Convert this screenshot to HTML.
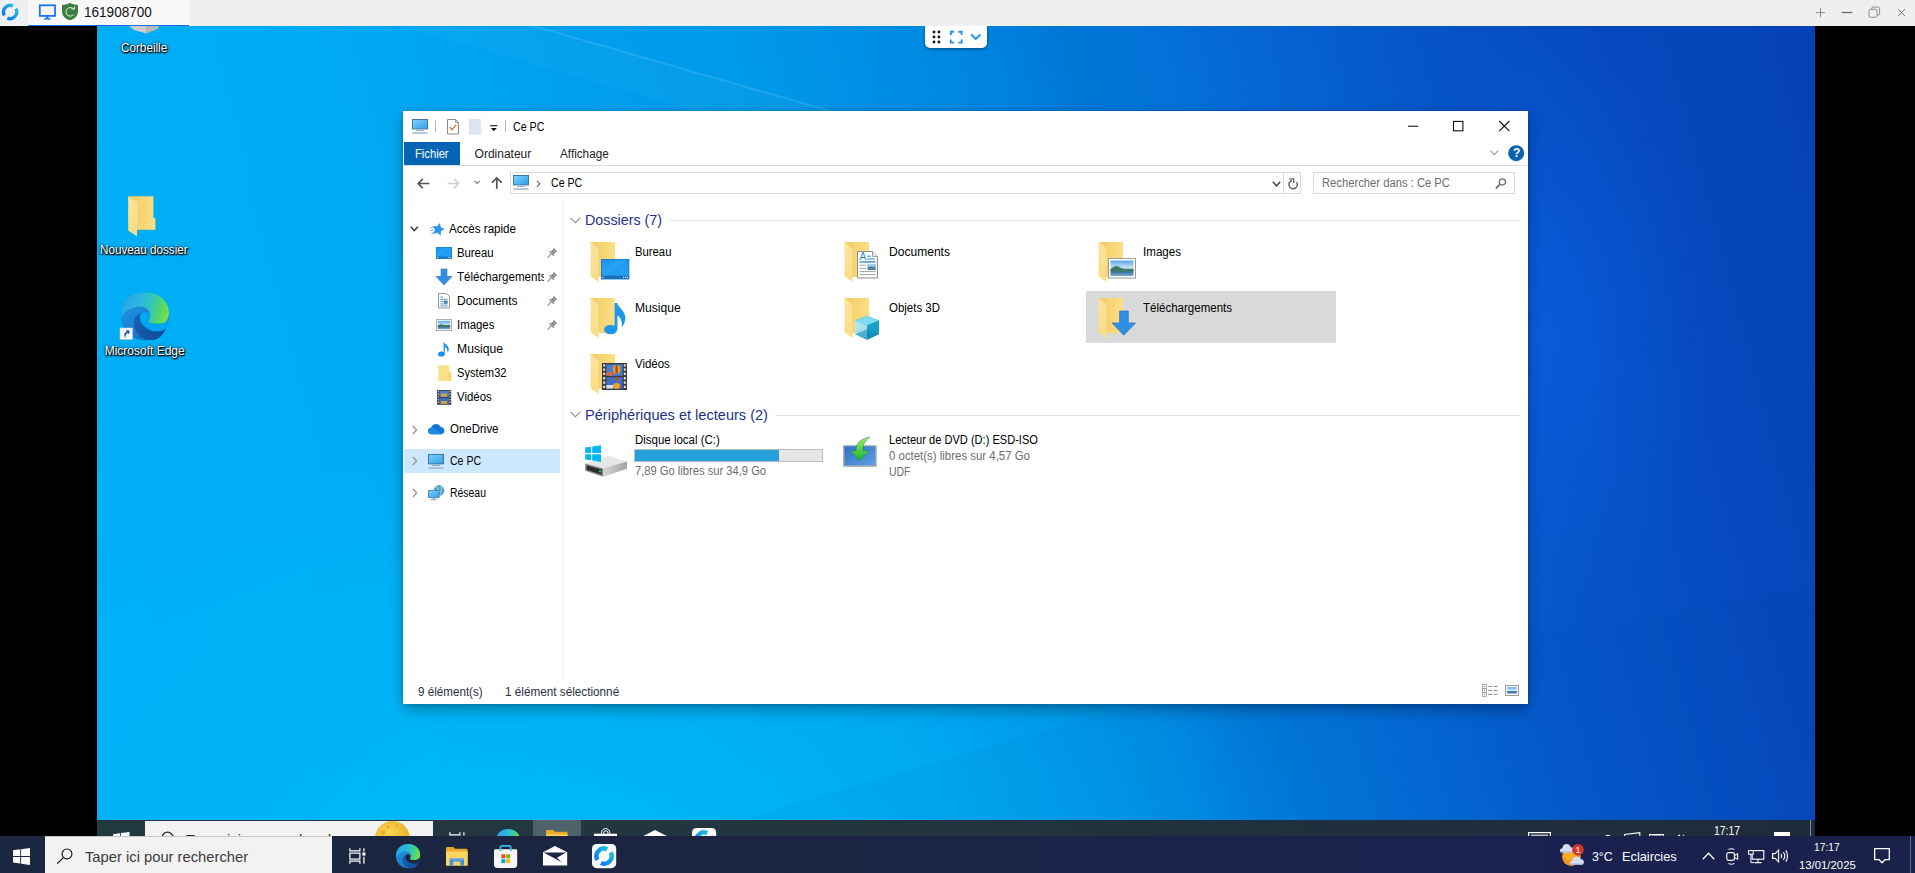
<!DOCTYPE html>
<html lang="fr"><head><meta charset="utf-8"><title>161908700</title>
<style>
html,body{margin:0;padding:0}
body{width:1915px;height:873px;overflow:hidden;background:#000;position:relative;font-family:"Liberation Sans",sans-serif;font-size:12px;color:#000}
.a{position:absolute}
.t{position:absolute;white-space:nowrap;line-height:1}
svg{position:absolute;overflow:visible}
#desk{left:97px;top:26px;width:1718px;height:810px;overflow:hidden;
 background:radial-gradient(ellipse 170px 300px at 1440px 310px,rgba(14,100,240,.5),rgba(14,100,240,0) 100%),radial-gradient(ellipse 760px 420px at 500px 840px,rgba(0,188,248,.85),rgba(0,188,248,0) 100%),linear-gradient(75deg,#00aff6 0%,#00adf4 18%,#00a2ef 32%,#0099e9 44.4%,#0086e0 55.6%,#0080de 58%,#0078d7 60.5%,#0372d8 65.6%,#0560d0 73.4%,#0654c6 80%,#0649be 88.8%,#0541b6 100%)}
.dl{color:#fff;text-shadow:0 1px 2px #000,1px 1px 1px #000,0 0 3px rgba(0,0,0,.8)}
</style></head><body>
<svg width="0" height="0" style="left:0;top:0"><defs>
<linearGradient id="gFb" x1="0" y1="0" x2="1" y2="0"><stop offset="0" stop-color="#f3cc62"/><stop offset="1" stop-color="#fbdf87"/></linearGradient>
<linearGradient id="gFf" x1="0" y1="0" x2="0" y2="1"><stop offset="0" stop-color="#fbe39a"/><stop offset="1" stop-color="#f9dc86"/></linearGradient>
<linearGradient id="gEdge" x1="0" y1="0.2" x2="0.5" y2="1"><stop offset="0" stop-color="#2396e0"/><stop offset="0.5" stop-color="#1b84d6"/><stop offset="1" stop-color="#1670c4"/></linearGradient><linearGradient id="gEdge3" x1="0" y1="0" x2="1" y2="1"><stop offset="0" stop-color="#1763b4"/><stop offset="1" stop-color="#0f4c9a"/></linearGradient>
<linearGradient id="gEdge2" x1="0" y1="0.35" x2="1" y2="0.55"><stop offset="0" stop-color="#2aa4e8"/><stop offset="0.4" stop-color="#2bb8de"/><stop offset="0.62" stop-color="#34c8b4"/><stop offset="0.85" stop-color="#58d866"/><stop offset="1" stop-color="#72e046"/></linearGradient>
<linearGradient id="gLogo" x1="0" y1="1" x2="1" y2="0"><stop offset="0" stop-color="#0a7cff"/><stop offset="1" stop-color="#1fc0d6"/></linearGradient>
<linearGradient id="gMon" x1="0" y1="0" x2="1" y2="1"><stop offset="0" stop-color="#7fd2fb"/><stop offset="1" stop-color="#2f9fe8"/></linearGradient>
<linearGradient id="gDsk" x1="0" y1="0" x2="1" y2="1"><stop offset="0" stop-color="#1b95ee"/><stop offset="0.5" stop-color="#27a2f3"/><stop offset="0.5" stop-color="#1e9af0"/><stop offset="1" stop-color="#2aa4f4"/></linearGradient>
<linearGradient id="gSky" x1="0" y1="0" x2="0" y2="1"><stop offset="0" stop-color="#5aa7e8"/><stop offset="0.5" stop-color="#cfe6f5"/><stop offset="0.55" stop-color="#3f7f6a"/><stop offset="0.75" stop-color="#3d78a5"/><stop offset="1" stop-color="#7fb0d0"/></linearGradient>
<linearGradient id="gCube" x1="0" y1="0" x2="1" y2="1"><stop offset="0" stop-color="#bfeaf2"/><stop offset="1" stop-color="#8fd6e6"/></linearGradient>
<linearGradient id="gHdd" x1="0" y1="0" x2="1" y2="0"><stop offset="0" stop-color="#d6d6d6"/><stop offset="1" stop-color="#a4a4a4"/></linearGradient>
<linearGradient id="gDvd" x1="0" y1="0" x2="1" y2="1"><stop offset="0" stop-color="#2f6fc8"/><stop offset="1" stop-color="#5f9fe0"/></linearGradient>
<linearGradient id="gGrn" x1="0" y1="0" x2="0" y2="1"><stop offset="0" stop-color="#9df06a"/><stop offset="1" stop-color="#19b52c"/></linearGradient>
<radialGradient id="gMoon" cx="0.4" cy="0.35" r="0.7"><stop offset="0" stop-color="#fbd75a"/><stop offset="1" stop-color="#eaa91e"/></radialGradient>
<g id="folder"><path d="M0.5 0H25V35H8z" fill="url(#gFb)"/><path d="M0.5 0L8.5 6.5V40L0.5 34.3z" fill="url(#gFf)"/></g>
<g id="monitor"><rect x="0.5" y="0.5" width="15" height="9.4" fill="url(#gMon)" stroke="#3f77a8" stroke-width="1"/><rect x="7" y="10.4" width="2" height="1" fill="#7fc4f0"/><rect x="4" y="11.1" width="8" height="0.9" fill="#8fa6ba"/><path d="M1 13.2H15L15.9 14.8H0.1z" fill="#a3b6c9"/></g>
<g id="edge" transform="scale(0.5)"><circle cx="24" cy="24.3" r="24" fill="url(#gEdge)"/><path d="M0.4 26C-1.5 12 9 0.2 24 0.2C38 0.2 48 9.5 48 21C48 26 46 31.8 39 31.8C34 31.8 29 31.4 27.6 30.2C26.5 29 29.6 27.5 29.2 22.5C28.8 19 26 14.8 19 14.6C11 14.4 3.5 19.5 0.4 26z" fill="url(#gEdge2)"/><path d="M20.6 20.6C16 22 12.6 26 13 32C13.6 40 20 47.8 30 48.1C37 48.3 42.6 43 44.8 36.4C41 39.4 35 40.2 30 38.4C23 35.8 18.6 30 18.8 25.6C18.9 23.4 19.6 21.6 20.6 20.6z" fill="url(#gEdge3)"/></g>
</defs></svg>
<div class="a" style="left:0px;top:0px;width:1915px;height:26px;background:#efeff2;"></div>
<div class="a" style="left:0px;top:25px;width:28px;height:1px;background:#fafafa;"></div>
<div class="a" style="left:28px;top:0px;width:161px;height:25px;background:#f8f8f8;"></div>
<div class="a" style="left:28px;top:25px;width:161px;height:1px;background:#1a6df5;"></div>
<svg style="left:2px;top:4px" width="16" height="16" viewBox="0 0 16 16"><g fill="none" stroke="url(#gLogo)" stroke-width="3.3" transform="translate(8.1 8)"><path d="M-5.7 3.3A6.6 6.6 0 0 1 2.8 -6"/><path d="M5.7 -3.3A6.6 6.6 0 0 1 -2.8 6"/></g></svg>
<svg style="left:38px;top:4px" width="19" height="17" viewBox="0 0 19 17"><rect x="1.8" y="1.3" width="15.2" height="10.6" fill="none" stroke="#1a73ff" stroke-width="1.8"/><rect x="8" y="12.5" width="2.6" height="2" fill="#1a73ff"/><rect x="6.1" y="14.3" width="6.4" height="1.4" fill="#1a73ff"/></svg>
<svg style="left:61px;top:2px" width="18" height="19" viewBox="0 0 18 19"><path d="M9 0.8C7 2.3 4 2.8 1 2.8V9.5C1 14 4.5 17 9 18.3C13.5 17 17 14 17 9.5V2.8C14 2.8 11 2.3 9 0.8z" fill="#3c7d40"/><path d="M12.6 7.1A4.3 4.3 0 1 0 12.9 12.2" fill="none" stroke="#e8f3e8" stroke-width="1"/><path d="M10.3 6.6L13.2 7.4L13.6 4.6" fill="none" stroke="#e8f3e8" stroke-width="1"/></svg>
<div class="t" style="left:84.2px;top:5.1px;font-size:14px;color:#111;transform:scaleX(0.968);transform-origin:0 0;">161908700</div>
<svg style="left:1815px;top:7px" width="12" height="12" viewBox="0 0 12 12"><path d="M1 5.6H10M5.5 1V10.2" stroke="#8a8a8a" stroke-width="1" fill="none"/></svg>
<svg style="left:1841px;top:7px" width="12" height="12" viewBox="0 0 12 12"><path d="M0.7 5.5H11.3" stroke="#666" stroke-width="1.3" fill="none"/></svg>
<svg style="left:1868px;top:6px" width="13" height="13" viewBox="0 0 13 13"><rect x="1" y="3.3" width="8" height="8" rx="1.5" fill="#efeff2" stroke="#8a8a8a" stroke-width="1"/><path d="M3.6 3V2.6Q3.6 1 5.2 1H10Q11.6 1 11.6 2.6V7.4Q11.6 9 10 9H9.4" fill="none" stroke="#8a8a8a" stroke-width="1"/></svg>
<svg style="left:1896px;top:7px" width="12" height="12" viewBox="0 0 12 12"><path d="M2 2L9.2 9.2M9.2 2L2 9.2" stroke="#777" stroke-width="1" fill="none"/></svg>
<div id="desk" class="a">
<svg style="left:0px;top:0px" width="1718" height="810" viewBox="0 0 1718 810"><path d="M434 0L440 0L736 85L730 85z" fill="#fff" opacity="0.13"/><path d="M300 0L437 0L733 85L600 85z" fill="#fff" opacity="0.025"/><path d="M640 794L1718 794L1718 560L1000 690z" fill="#003a80" opacity="0.035"/></svg>
</div>
<div class="a" style="left:925px;top:26px;width:62px;height:22px;background:#fff;border-radius:0 0 5px 5px;box-shadow:0 1px 3px rgba(0,0,0,.45);clip-path:inset(0 -6px -6px -6px)"></div>
<svg style="left:931.6px;top:29.7px" width="10" height="15" viewBox="0 0 10 15"><g fill="#1a1a1a"><circle cx="2" cy="2" r="1.45"/><circle cx="2" cy="7" r="1.45"/><circle cx="2" cy="12" r="1.45"/><circle cx="6.9" cy="2" r="1.45"/><circle cx="6.9" cy="7" r="1.45"/><circle cx="6.9" cy="12" r="1.45"/></g></svg>
<svg style="left:950px;top:30.5px" width="13" height="13" viewBox="0 0 13 13"><path d="M0.8 4V0.8H4M8.4 0.8H11.6V4M11.6 8.4V11.6H8.4M4 11.6H0.8V8.4" fill="none" stroke="#1e90ff" stroke-width="1.9"/></svg>
<svg style="left:970px;top:33px" width="12" height="8" viewBox="0 0 12 8"><path d="M1.2 1.5L5.8 6L10.4 1.5" fill="none" stroke="#1e90ff" stroke-width="1.9"/></svg>
<svg style="left:129px;top:26px" width="30" height="8" viewBox="0 0 30 8"><path d="M0 0H29.6L29 2.6L17 7.6L5 4z" fill="#c9cbcf"/><path d="M17 0H29.6L29 2.6L17 7.6z" fill="#b4b6ba"/></svg>
<div class="t dl" style="left:120.9px;top:41.6px;font-size:12px;color:#fff;transform:scaleX(0.976);transform-origin:0 0;">Corbeille</div>
<svg style="left:127.5px;top:195.7px" width="28" height="41" viewBox="0 0 28 41"><path d="M0.3 0.3H25.4V22.3H27.4V33.8H0.3z" fill="url(#gFb)"/><path d="M0.3 0.3L9.4 6.8L9 40.2L0.3 34.8z" fill="url(#gFf)"/></svg>
<div class="t dl" style="left:100.2px;top:244.3px;font-size:12px;color:#fff;transform:scaleX(0.973);transform-origin:0 0;">Nouveau dossier</div>
<svg style="left:120.5px;top:292px" width="48" height="48" viewBox="0 0 48 48"><g transform="scale(2)"><use href="#edge"/><path transform="scale(0.5)" d="M21 21C23 19.6 27 20 29 22.4C29.6 27.5 26.5 29 27.6 30.2C29 31.4 34 31.8 39 31.8C43 31.8 46 29.5 47.4 26C47.2 30 46.4 33.5 44.8 36.4C41 39.4 35 40.2 30 38.4C23 35.8 18.6 30 18.8 25.6C18.9 23.4 19.6 21.8 21 21z" fill="#00a6f3"/></g></svg>
<svg style="left:120px;top:327.6px" width="12.6" height="11.4" viewBox="0 0 12.6 11.4"><rect x="0" y="0" width="12.6" height="11.4" fill="#f4f6f8" stroke="#c8ccd0" stroke-width="0.6"/><path d="M3 9C3 5.5 5 4 8 4V2.2L10.8 5L8 7.8V6C6 6 4.3 6.5 3 9z" fill="#2458b8" transform="rotate(-32 6.3 5.7)"/></svg>
<div class="t dl" style="left:104.7px;top:344.6px;font-size:12px;color:#fff;transform:scaleX(1.000);transform-origin:0 0;">Microsoft Edge</div>
<div class="a" style="left:403px;top:110.8px;width:1125px;height:592.9px;background:#fff;box-shadow:0 6px 14px -1px rgba(0,0,0,.32),0 0 4px rgba(0,0,0,.18)"></div>
<svg style="left:412px;top:119px" width="16" height="15" viewBox="0 0 16 15"><use href="#monitor"/></svg>
<div class="a" style="left:435px;top:120px;width:1px;height:12px;background:#b5b5b5;"></div>
<svg style="left:447px;top:118.8px" width="12" height="15.5" viewBox="0 0 12 15.5"><path d="M0.5 0.5H8.5L11.5 3.5V15H0.5z" fill="#fff" stroke="#8a8a8a" stroke-width="1"/><path d="M8.5 0.5V3.5H11.5" fill="none" stroke="#8a8a8a" stroke-width="0.8"/><path d="M2.8 8.3L5 10.8L9.2 5.6" fill="none" stroke="#e8702a" stroke-width="1.3"/></svg>
<svg style="left:469px;top:119.2px" width="13" height="15.7" viewBox="0 0 13 15.7"><path d="M0 0H11.8V15.7H0z" fill="#dce4f2"/><path d="M10.6 9H12.8V15.7H10.6z" fill="#e3eaf5"/></svg>
<svg style="left:489.5px;top:124.5px" width="8" height="7" viewBox="0 0 8 7"><path d="M0.3 0.7H7.3" stroke="#111" stroke-width="1.1"/><path d="M0.8 2.9H6.8L3.8 6.2z" fill="#111"/></svg>
<div class="a" style="left:505px;top:120px;width:1px;height:12px;background:#b5b5b5;"></div>
<div class="t" style="left:513.4px;top:120.6px;font-size:12px;color:#000;transform:scaleX(0.888);transform-origin:0 0;">Ce PC</div>
<svg style="left:1407px;top:120px" width="104" height="12" viewBox="0 0 104 12"><path d="M1 6.2H11.2" stroke="#111" stroke-width="1.1"/><rect x="46.5" y="1.4" width="9.4" height="9.4" fill="none" stroke="#111" stroke-width="1.1"/><path d="M92.2 1L102.4 11.2M102.4 1L92.2 11.2" stroke="#111" stroke-width="1.1"/></svg>
<div class="a" style="left:404px;top:142px;width:56px;height:23px;background:#0564b4;"></div>
<div class="t" style="left:415.4px;top:147.8px;font-size:12px;color:#fff;transform:scaleX(0.933);transform-origin:0 0;">Fichier</div>
<div class="t" style="left:474.6px;top:147.8px;font-size:12px;color:#222;transform:scaleX(1.000);transform-origin:0 0;">Ordinateur</div>
<div class="t" style="left:560.2px;top:147.8px;font-size:12px;color:#222;transform:scaleX(0.978);transform-origin:0 0;">Affichage</div>
<div class="a" style="left:404px;top:165px;width:1123px;height:1px;background:#dadbdc;"></div>
<svg style="left:1490px;top:150px" width="9" height="6" viewBox="0 0 9 6"><path d="M0.5 0.7L4.3 4.6L8.1 0.7" fill="none" stroke="#9a9a9a" stroke-width="1.1"/></svg>
<svg style="left:1508px;top:145px" width="17" height="17" viewBox="0 0 17 17"><circle cx="8.2" cy="8.2" r="8" fill="#0b62ad"/></svg>
<div class="t" style="left:1513.0px;top:147.4px;font-size:12px;color:#fff;font-weight:bold;">?</div>
<svg style="left:417px;top:177.5px" width="13" height="11" viewBox="0 0 13 11"><path d="M12.3 5.5H1.2M5.8 0.9L1.2 5.5L5.8 10.1" fill="none" stroke="#555" stroke-width="1.7"/></svg>
<svg style="left:446.5px;top:177.5px" width="13" height="11" viewBox="0 0 13 11"><path d="M0.5 5.5H11.6M7 0.9L11.6 5.5L7 10.1" fill="none" stroke="#cfcfcf" stroke-width="1.5"/></svg>
<svg style="left:473.5px;top:180px" width="7" height="5" viewBox="0 0 7 5"><path d="M0.6 0.8L3.2 3.4L5.8 0.8" fill="none" stroke="#7a7a7a" stroke-width="1.2"/></svg>
<svg style="left:491px;top:177px" width="12" height="12" viewBox="0 0 12 12"><path d="M5.8 11.8V0.9M1 5.6L5.8 0.9L10.6 5.6" fill="none" stroke="#555" stroke-width="1.7"/></svg>
<div class="a" style="left:510px;top:172px;width:789px;height:20px;background:#fff;border:1px solid #d9d9d9"></div>
<div class="a" style="left:1283px;top:173px;width:1px;height:20px;background:#d9d9d9;"></div>
<svg style="left:513px;top:175px" width="16" height="15" viewBox="0 0 16 15"><use href="#monitor"/></svg>
<svg style="left:535.6px;top:179.5px" width="5" height="8" viewBox="0 0 5 8"><path d="M0.8 0.8L3.8 3.8L0.8 6.8" fill="none" stroke="#6a6a6a" stroke-width="1.2"/></svg>
<div class="t" style="left:550.5px;top:176.7px;font-size:12px;color:#000;transform:scaleX(0.883);transform-origin:0 0;">Ce PC</div>
<svg style="left:1271.5px;top:181px" width="10" height="7" viewBox="0 0 10 7"><path d="M0.8 0.8L4.5 4.8L8.2 0.8" fill="none" stroke="#444" stroke-width="1.5"/></svg>
<svg style="left:1287px;top:177.5px" width="12" height="12" viewBox="0 0 12 12"><path d="M9.6 4.2A4.2 4.2 0 1 1 5 2.5" fill="none" stroke="#666" stroke-width="1.5"/><path d="M2.2 0.9H6.7V5.1" fill="none" stroke="#666" stroke-width="1.4"/></svg>
<div class="a" style="left:1313px;top:172px;width:200px;height:20px;background:#fff;border:1px solid #d9d9d9"></div>
<div class="t" style="left:1322.0px;top:176.6px;font-size:12px;color:#6d6d6d;transform:scaleX(0.936);transform-origin:0 0;">Rechercher dans : Ce PC</div>
<svg style="left:1494.5px;top:178px" width="12" height="11" viewBox="0 0 12 11"><circle cx="7.4" cy="3.9" r="3.1" fill="none" stroke="#6a6a6a" stroke-width="1.3"/><path d="M5.2 6.1L0.8 10.3" stroke="#6a6a6a" stroke-width="1.7"/></svg>
<div class="a" style="left:562px;top:201px;width:1px;height:478px;background:#f1f1f1;"></div>
<div class="a" style="left:404px;top:449px;width:156px;height:24px;background:#cce8ff;"></div>
<svg style="left:410.3px;top:225.5px" width="9" height="7" viewBox="0 0 9 7"><path d="M0.8 0.8L4.3 4.6L7.8 0.8" fill="none" stroke="#404040" stroke-width="1.5"/></svg>
<svg style="left:412px;top:424.5px" width="6" height="10" viewBox="0 0 6 10"><path d="M0.8 0.8L4.6 4.9L0.8 9" fill="none" stroke="#9a9a9a" stroke-width="1.4"/></svg>
<svg style="left:412px;top:456.3px" width="6" height="10" viewBox="0 0 6 10"><path d="M0.8 0.8L4.6 4.9L0.8 9" fill="none" stroke="#9a9a9a" stroke-width="1.4"/></svg>
<svg style="left:412px;top:488.3px" width="6" height="10" viewBox="0 0 6 10"><path d="M0.8 0.8L4.6 4.9L0.8 9" fill="none" stroke="#9a9a9a" stroke-width="1.4"/></svg>
<svg style="left:430px;top:222.5px" width="14" height="12" viewBox="0 0 14 12"><path d="M8.3 0.3L10.1 4.1L14 4.6L11.1 7.4L11.8 11.6L8.3 9.5L4.8 11.6L5.5 7.4L2.8 4.8L6.5 4.1z" fill="#2b98f0" stroke="#2180d8" stroke-width="0.5" transform="rotate(14 8.3 6.2)"/><path d="M0.6 4.8L4 3.6M0.2 7.6L3.6 6.8M1.4 10.6L4.4 9.6" stroke="#4aa6f0" stroke-width="0.9"/></svg>
<svg style="left:436px;top:247px" width="16" height="12" viewBox="0 0 16 12"><rect x="0" y="0" width="16" height="11.8" fill="url(#gDsk)"/><rect x="0" y="9.6" width="16" height="2.2" fill="#1a6fb8"/><rect x="0.3" y="0.3" width="15.4" height="11.2" fill="none" stroke="#1778c8" stroke-width="0.6"/><rect x="0.9" y="10.1" width="1" height="1" fill="#e8f6ff"/><rect x="12.2" y="10.1" width="1" height="1" fill="#e8f6ff"/><rect x="14" y="10.1" width="1" height="1" fill="#e8f6ff"/></svg>
<svg style="left:436px;top:269px" width="16" height="16" viewBox="0 0 16 16"><path d="M5 0H11V7.5H16L8 16L0 7.5H5z" fill="#2f8fe2" stroke="#2a78c8" stroke-width="0.6"/></svg>
<svg style="left:438px;top:293px" width="12" height="15.5" viewBox="0 0 12 15.5"><path d="M0.5 0.5H8.5L11.5 3.5V15H0.5z" fill="#fff" stroke="#8c8c8c" stroke-width="0.9"/><path d="M2.3 4H5M2.3 6.3H9.6M2.3 8.6H9.6M2.3 10.9H9.6M2.3 13H9.6" stroke="#4a8ccc" stroke-width="0.9"/><rect x="6" y="7.6" width="3.6" height="3" fill="#4a7fa8"/></svg>
<svg style="left:436px;top:319px" width="16" height="12" viewBox="0 0 16 12"><rect x="0.4" y="0.4" width="15.2" height="11.2" fill="#fff" stroke="#9a9a9a" stroke-width="0.8"/><rect x="1.8" y="1.8" width="12.4" height="8.4" fill="url(#gSky)"/><path d="M1.8 7C4 4.8 6 4.8 8 6.2C10 7 12 7.2 14.2 7.3V8H1.8z" fill="#3f7a5e"/></svg>
<svg style="left:438px;top:341px" width="12" height="16" viewBox="0 0 12 16"><ellipse cx="3.4" cy="13" rx="3.4" ry="2.6" fill="#1e90e8"/><path d="M5.6 13.2V0.4C6.2 2.6 10.8 4.6 10.8 8.2C10.8 10 10 11 9.4 11.6C9.8 9.4 9 7 6.8 6V13.2z" fill="#1e90e8"/></svg>
<svg style="left:437.5px;top:364.8px" width="14" height="17" viewBox="0 0 14 17"><path d="M0.3 0.3H11.5V16H0.3z" fill="#fbe08a"/><path d="M10.6 7H13.4V16H10.6z" fill="#f6d576"/></svg>
<svg style="left:436.8px;top:390px" width="14.2" height="14.8" viewBox="0 0 14.2 14.8"><rect x="0" y="0" width="14.2" height="14.8" fill="#3a3a3a"/><rect x="2.4" y="0.8" width="9.4" height="6.2" fill="#4a7fd0"/><rect x="2.4" y="7.8" width="9.4" height="6.2" fill="#3f6fc4"/><rect x="4" y="3.5" width="6" height="3.2" fill="#d8a23a"/><rect x="4" y="11" width="6" height="2.8" fill="#d8a23a"/><path d="M1.2 0.8V14M13 0.8V14" stroke="#e8e8e8" stroke-width="1.1" stroke-dasharray="1.4 1.3"/></svg>
<svg style="left:427.7px;top:423.6px" width="16.4" height="10.2" viewBox="0 0 16.4 10.2"><path d="M4 10.2C1.6 10.2 0 8.8 0 6.9C0 5.1 1.4 3.9 3 3.8C3.7 1.5 5.7 0 8 0C10.1 0 11.9 1.2 12.7 3.1C14.8 3.2 16.4 4.7 16.4 6.7C16.4 8.7 14.8 10.2 12.8 10.2z" fill="#1577d3"/><path d="M4 10.2C1.6 10.2 0 8.8 0 6.9C0 5.1 1.4 3.9 3 3.8C5 3.4 7 4.5 8.2 6L13.5 10.2z" fill="#1c8ae6"/></svg>
<svg style="left:428px;top:454px" width="16" height="15" viewBox="0 0 16 15"><use href="#monitor"/></svg>
<svg style="left:427.7px;top:485.3px" width="17" height="15.6" viewBox="0 0 17 15.6"><circle cx="11" cy="5.4" r="5.3" fill="#4aa3e0"/><path d="M8 1.5C10 3 11 5 10.6 8M13 0.6C14 3 13.6 6 12 9" stroke="#9fd6a0" stroke-width="1.2" fill="none"/><rect x="0.5" y="5.4" width="10.6" height="7" fill="url(#gMon)" stroke="#4b86b5" stroke-width="0.9"/><rect x="4.4" y="12.8" width="2.8" height="1.2" fill="#8aa"/><rect x="2.4" y="14.3" width="6.8" height="1" fill="#7fa8cc"/></svg>
<svg style="left:546.7px;top:247.8px" width="10" height="10" viewBox="0 0 10 10"><path d="M7.04 0.04L10.16 3.16L9.1 4.22L8.95 4.07L6.61 6.41L7.39 7.19L6.41 8.17L2.03 3.79L3.01 2.81L3.79 3.59L6.13 1.25L5.98 1.1z" fill="#8c9496"/><path d="M4.5 5.7L0.5 9.7" stroke="#8c9496" stroke-width="1.2"/></svg>
<svg style="left:546.7px;top:271.8px" width="10" height="10" viewBox="0 0 10 10"><path d="M7.04 0.04L10.16 3.16L9.1 4.22L8.95 4.07L6.61 6.41L7.39 7.19L6.41 8.17L2.03 3.79L3.01 2.81L3.79 3.59L6.13 1.25L5.98 1.1z" fill="#8c9496"/><path d="M4.5 5.7L0.5 9.7" stroke="#8c9496" stroke-width="1.2"/></svg>
<svg style="left:546.7px;top:295.8px" width="10" height="10" viewBox="0 0 10 10"><path d="M7.04 0.04L10.16 3.16L9.1 4.22L8.95 4.07L6.61 6.41L7.39 7.19L6.41 8.17L2.03 3.79L3.01 2.81L3.79 3.59L6.13 1.25L5.98 1.1z" fill="#8c9496"/><path d="M4.5 5.7L0.5 9.7" stroke="#8c9496" stroke-width="1.2"/></svg>
<svg style="left:546.7px;top:319.8px" width="10" height="10" viewBox="0 0 10 10"><path d="M7.04 0.04L10.16 3.16L9.1 4.22L8.95 4.07L6.61 6.41L7.39 7.19L6.41 8.17L2.03 3.79L3.01 2.81L3.79 3.59L6.13 1.25L5.98 1.1z" fill="#8c9496"/><path d="M4.5 5.7L0.5 9.7" stroke="#8c9496" stroke-width="1.2"/></svg>
<div class="t" style="left:449.0px;top:222.8px;font-size:12px;color:#000;transform:scaleX(0.966);transform-origin:0 0;">Accès rapide</div>
<div class="t" style="left:457.3px;top:246.8px;font-size:12px;color:#000;transform:scaleX(0.943);transform-origin:0 0;">Bureau</div>
<div class="a" style="left:457.3px;top:269px;width:86.99999999999994px;height:18px;overflow:hidden"><div class="t" style="left:0.0px;top:1.8px;font-size:12px;color:#000;transform:scaleX(0.965);transform-origin:0 0;">Téléchargements</div>
</div>
<div class="t" style="left:457.3px;top:294.8px;font-size:12px;color:#000;transform:scaleX(0.997);transform-origin:0 0;">Documents</div>
<div class="t" style="left:457.3px;top:318.8px;font-size:12px;color:#000;transform:scaleX(0.950);transform-origin:0 0;">Images</div>
<div class="t" style="left:457.3px;top:342.8px;font-size:12px;color:#000;transform:scaleX(1.014);transform-origin:0 0;">Musique</div>
<div class="t" style="left:457.3px;top:366.8px;font-size:12px;color:#000;transform:scaleX(0.928);transform-origin:0 0;">System32</div>
<div class="t" style="left:457.3px;top:390.8px;font-size:12px;color:#000;transform:scaleX(0.951);transform-origin:0 0;">Vidéos</div>
<div class="t" style="left:449.5px;top:422.8px;font-size:12px;color:#000;transform:scaleX(0.957);transform-origin:0 0;">OneDrive</div>
<div class="t" style="left:449.5px;top:454.8px;font-size:12px;color:#000;transform:scaleX(0.877);transform-origin:0 0;">Ce PC</div>
<div class="t" style="left:449.5px;top:486.8px;font-size:12px;color:#000;transform:scaleX(0.870);transform-origin:0 0;">Réseau</div>
<svg style="left:570px;top:216.5px" width="11" height="7" viewBox="0 0 11 7"><path d="M0.6 0.8L5.4 5.8L10.2 0.8" fill="none" stroke="#8a8a8a" stroke-width="1.1"/></svg>
<div class="t" style="left:585.4px;top:212.3px;font-size:15px;color:#1e3287;transform:scaleX(0.952);transform-origin:0 0;">Dossiers (7)</div>
<div class="a" style="left:669px;top:220px;width:851px;height:1px;background:#e2e2e2;"></div>
<svg style="left:570px;top:411.3px" width="11" height="7" viewBox="0 0 11 7"><path d="M0.6 0.8L5.4 5.8L10.2 0.8" fill="none" stroke="#8a8a8a" stroke-width="1.1"/></svg>
<div class="t" style="left:585.4px;top:407.3px;font-size:15px;color:#1e3287;transform:scaleX(0.971);transform-origin:0 0;">Périphériques et lecteurs (2)</div>
<div class="a" style="left:775px;top:415px;width:745px;height:1px;background:#e2e2e2;"></div>
<div class="a" style="left:1086px;top:291px;width:250px;height:51.5px;background:#d9d9d9;"></div>
<svg style="left:590px;top:242px" width="25" height="40" viewBox="0 0 25 40"><use href="#folder"/></svg>
<svg style="left:590px;top:298px" width="25" height="40" viewBox="0 0 25 40"><use href="#folder"/></svg>
<svg style="left:590px;top:354px" width="25" height="40" viewBox="0 0 25 40"><use href="#folder"/></svg>
<svg style="left:844px;top:242px" width="25" height="40" viewBox="0 0 25 40"><use href="#folder"/></svg>
<svg style="left:844px;top:298px" width="25" height="40" viewBox="0 0 25 40"><use href="#folder"/></svg>
<svg style="left:1097.5px;top:242px" width="25" height="40" viewBox="0 0 25 40"><use href="#folder"/></svg>
<svg style="left:1097.5px;top:298px" width="25" height="40" viewBox="0 0 25 40"><use href="#folder"/></svg>
<svg style="left:601px;top:258.9px" width="28.2" height="20.2" viewBox="0 0 28.2 20.2"><rect width="28.2" height="20.2" fill="url(#gDsk)"/><rect y="16.6" width="28.2" height="3.6" fill="#1a6fb8"/><rect x="0.4" y="0.4" width="27.4" height="19.4" fill="none" stroke="#1778c8" stroke-width="0.8"/><rect x="1.2" y="17.8" width="1.2" height="1.2" fill="#dff"/><rect x="22" y="17.8" width="1.2" height="1.2" fill="#dff"/><rect x="24" y="17.8" width="1.2" height="1.2" fill="#dff"/><rect x="26" y="17.8" width="1.2" height="1.2" fill="#dff"/></svg>
<svg style="left:857px;top:251px" width="21" height="27.6" viewBox="0 0 21 27.6"><path d="M0.5 0.5H15.5L20.5 5.5V27H0.5z" fill="#fff" stroke="#8c8c8c" stroke-width="1"/><path d="M15.5 0.5V5.5H20.5" fill="#eee" stroke="#8c8c8c" stroke-width="0.8"/><path d="M10 5.2H14M10 8H18" stroke="#3c8fd0" stroke-width="1"/><path d="M2.4 11H18.6" stroke="#2b86c8" stroke-width="1.3"/><path d="M2.4 14.2H9M2.4 17.4H9M2.4 20.6H18.6M2.4 23.6H18.6" stroke="#9aa3ad" stroke-width="1"/><rect x="10.6" y="13" width="8" height="6" fill="#4a7f9e"/><rect x="10.6" y="13" width="8" height="2.6" fill="#a8cfe8"/></svg>
<div class="t" style="left:859.6px;top:251.7px;font-size:10px;color:#2b86c8;font-family:"Liberation Serif",serif;font-style:italic;font-weight:bold;">A</div>
<svg style="left:1108px;top:258px" width="28" height="20.6" viewBox="0 0 28 20.6"><rect x="0.5" y="0.5" width="27" height="19.6" fill="#fff" stroke="#9a9a9a" stroke-width="1"/><rect x="2.5" y="2.5" width="23" height="15.6" fill="url(#gSky)"/><path d="M2.5 11.6C6 7.5 9 7 12 9.5C15 11 20 11.5 25.5 12V13.2H2.5z" fill="#3f7a5e"/></svg>
<svg style="left:601px;top:303px" width="22" height="34" viewBox="0 0 22 34"><ellipse cx="9.6" cy="26.6" rx="6.6" ry="4.7" fill="#1e96ea"/><path d="M13.6 27V0H16.2C17 4.5 24.4 7.5 24.4 15C24.4 19 22.6 22 20.6 24.2C21.6 19 20 14 16.4 12.4V27z" fill="#1e96ea"/></svg>
<svg style="left:855px;top:316px" width="24" height="24" viewBox="0 0 24 24"><path d="M12 0L24 4.6V18L12 23.8L0 18V4.6z" fill="#19a7c9"/><path d="M12 0L24 4.6L12 9.6L0 4.6z" fill="#7fdcec"/><path d="M0 4.6L12 9.6V23.8L0 18z" fill="url(#gCube)"/><path d="M12 9.6L24 4.6V18L12 23.8z" fill="#18a0c6"/><path d="M0 18L12 13.5L24 18L12 23.8z" fill="#0e86ad" opacity="0.55"/></svg>
<svg style="left:1111.7px;top:311px" width="23.5" height="24.2" viewBox="0 0 23.5 24.2"><path d="M7.6 0H16.3V12H23.5L11.8 24.2L0 12H7.6z" fill="#2f8fe2" stroke="#2574c4" stroke-width="0.7"/></svg>
<svg style="left:602px;top:362.5px" width="25" height="27" viewBox="0 0 25 27"><rect width="25" height="27" fill="#3a3a3a"/><rect x="4.4" y="1.4" width="16.2" height="11.4" fill="#4a7fd0"/><rect x="4.4" y="14.2" width="16.2" height="11.4" fill="#3f6fc4"/><path d="M4.4 9H11V12.8H4.4z" fill="#d86a4a"/><path d="M4.4 22H11V25.6H4.4z" fill="#e0e0e8"/><ellipse cx="14.6" cy="6.4" rx="3.6" ry="4.4" fill="#e8a42a"/><ellipse cx="14.6" cy="6.4" rx="1.3" ry="4.4" fill="#b8401a"/><ellipse cx="14.6" cy="23" rx="3.6" ry="3" fill="#e8a42a"/><path d="M12.8 14.2H16.4L15.4 18.5H13.8z" fill="#c8501a"/><path d="M2.2 1.2V26M22.8 1.2V26" stroke="#f0f0f0" stroke-width="1.9" stroke-dasharray="2.3 2"/></svg>
<div class="t" style="left:635.3px;top:245.8px;font-size:12px;color:#000;transform:scaleX(0.941);transform-origin:0 0;">Bureau</div>
<div class="t" style="left:635.3px;top:301.8px;font-size:12px;color:#000;transform:scaleX(1.008);transform-origin:0 0;">Musique</div>
<div class="t" style="left:635.3px;top:357.8px;font-size:12px;color:#000;transform:scaleX(0.951);transform-origin:0 0;">Vidéos</div>
<div class="t" style="left:889.0px;top:245.8px;font-size:12px;color:#000;transform:scaleX(1.005);transform-origin:0 0;">Documents</div>
<div class="t" style="left:889.0px;top:301.8px;font-size:12px;color:#000;transform:scaleX(0.956);transform-origin:0 0;">Objets 3D</div>
<div class="t" style="left:1143.0px;top:245.8px;font-size:12px;color:#000;transform:scaleX(0.966);transform-origin:0 0;">Images</div>
<div class="t" style="left:1143.0px;top:301.8px;font-size:12px;color:#000;transform:scaleX(0.960);transform-origin:0 0;">Téléchargements</div>
<svg style="left:585px;top:444.8px" width="42.5" height="32.5" viewBox="0 0 42.5 32.5"><path d="M0.2 18.4L23 10.7L42 16.4L18 23.2z" fill="#e6e8e8"/><path d="M0.2 18.4L18 23.2V31.8L0.2 25.8z" fill="#8c8c8c"/><path d="M1.6 20.3L16.6 24.5V29.7L1.6 24.8z" fill="#2c2c2c"/><path d="M18 23.2L42 16.4V23.8L18 31.8z" fill="url(#gHdd)"/><rect x="14" y="25.6" width="2" height="1.7" fill="#2fe04a"/><path d="M0.2 2.6L6 1.8V8H0.2zM7.2 1.6L16 0.2V8H7.2zM0.2 9.2H6V15.2L0.2 14.6zM7.2 9.2H16V17L7.2 15.4z" fill="#00b7f1"/></svg>
<div class="t" style="left:635.0px;top:433.8px;font-size:12px;color:#000;transform:scaleX(0.956);transform-origin:0 0;">Disque local (C:)</div>
<div class="a" style="left:634px;top:449px;width:187px;height:11px;background:#e6e6e6;border:1px solid #bcbcbc"></div>
<div class="a" style="left:635px;top:450px;width:144px;height:11px;background:#26a0da;"></div>
<div class="t" style="left:634.9px;top:464.8px;font-size:12px;color:#6d6d6d;transform:scaleX(0.931);transform-origin:0 0;">7,89 Go libres sur 34,9 Go</div>
<svg style="left:843.2px;top:437px" width="34" height="30" viewBox="0 0 34 30"><rect x="0.1" y="8.2" width="33.6" height="21.6" fill="#9ea8b2"/><rect x="1.6" y="9.4" width="30.6" height="18.8" fill="url(#gDvd)"/><path d="M26.6 0.2C18 1.5 12.5 6.5 13.1 13.9H7.7L16.3 23.3L26 13.9H20C19.4 8 22 3.5 26.6 0.2z" fill="url(#gGrn)" stroke="#1a9a2a" stroke-width="0.6"/></svg>
<div class="t" style="left:889.3px;top:433.8px;font-size:12px;color:#000;transform:scaleX(0.923);transform-origin:0 0;">Lecteur de DVD (D:) ESD-ISO</div>
<div class="t" style="left:889.3px;top:449.8px;font-size:12px;color:#6d6d6d;transform:scaleX(0.952);transform-origin:0 0;">0 octet(s) libres sur 4,57 Go</div>
<div class="t" style="left:889.3px;top:465.8px;font-size:12px;color:#6d6d6d;transform:scaleX(0.872);transform-origin:0 0;">UDF</div>
<div class="t" style="left:418.0px;top:685.8px;font-size:12px;color:#2b2f3e;transform:scaleX(0.970);transform-origin:0 0;">9 élément(s)</div>
<div class="t" style="left:504.6px;top:685.8px;font-size:12px;color:#2b2f3e;transform:scaleX(0.978);transform-origin:0 0;">1 élément sélectionné</div>
<svg style="left:1482px;top:684px" width="16" height="13" viewBox="0 0 16 13"><g fill="none" stroke="#9a9a9a" stroke-width="0.8"><rect x="0.4" y="0.4" width="4.2" height="4"/><rect x="0.4" y="4.4" width="4.2" height="4"/><rect x="0.4" y="8.4" width="4.2" height="4"/></g><path d="M6.2 2.4H10M11.8 2.4H15.6M6.2 6.4H10M11.8 6.4H15.6M6.2 10.4H10M11.8 10.4H15.6" stroke="#7a7a7a" stroke-width="0.9"/><rect x="2" y="1.9" width="1" height="1" fill="#666"/><rect x="2" y="5.9" width="1" height="1" fill="#666"/><rect x="2" y="9.9" width="1" height="1" fill="#a33"/></svg>
<svg style="left:1505px;top:685px" width="14" height="11" viewBox="0 0 14 11"><rect x="0.5" y="0.5" width="13" height="10" fill="#fff" stroke="#9a9a9a" stroke-width="1"/><rect x="2.2" y="2.2" width="9.6" height="6.6" fill="url(#gSky)"/></svg>
<div class="a" style="left:97px;top:820px;width:1718px;height:16px;background:linear-gradient(90deg,#22383f 0%,#22363f 40%,#1f2f3d 75%,#1e2b3b 100%);overflow:hidden">
<svg style="left:16px;top:11.700000000000045px" width="16.5" height="16.5" viewBox="0 0 17 17"><path d="M0 2.3L7.2 1.3V8H0zM8.1 1.15L17 0V8H8.1zM0 8.9H7.2V15.6L0 14.6zM8.1 8.9H17V17L8.1 15.8z" fill="#fff"/></svg>
<div class="a" style="left:48px;top:1px;width:287.6px;height:40px;background:#f2f2f2;"></div>
<svg style="left:63px;top:11px" width="16" height="16" viewBox="0 0 16 16"><circle cx="7.5" cy="6.6" r="5.4" fill="none" stroke="#222" stroke-width="1.3"/></svg>
<div class="t" style="left:89.0px;top:12.1px;font-size:15px;color:#333;transform:scaleX(0.983);transform-origin:0 0;">Taper ici pour rechercher</div>
<svg style="left:278px;top:0.6000000000000227px" width="35" height="35" viewBox="0 0 35 35"><circle cx="17.4" cy="17.4" r="17.4" fill="url(#gMoon)"/><circle cx="13" cy="6" r="1.7" fill="#e6ac28"/><circle cx="22" cy="4.6" r="1.1" fill="#e6ac28"/><circle cx="8" cy="11.5" r="2.2" fill="#e6ac28"/></svg>
<svg style="left:351.6px;top:11.700000000000045px" width="17" height="16" viewBox="0 0 17 16"><g fill="none" stroke="#fff" stroke-width="1.2"><path d="M0.9 0.3V2.9H10.9V0.3M0.9 15.7V13.1H10.9V15.7"/><rect x="0.9" y="5.1" width="10" height="6"/><path d="M14.9 0.3V3.6M14.9 8.7V15.7"/></g><rect x="13.4" y="4.5" width="3" height="3.1" fill="#fff"/></svg>
<svg style="left:399px;top:8.5px" width="24" height="24" viewBox="0 0 24 24"><use href="#edge"/><path transform="scale(0.5)" d="M21 21C23 19.6 27 20 29 22.4C29.6 27.5 26.5 29 27.6 30.2C29 31.4 34 31.8 39 31.8C43 31.8 46 29.5 47.4 26C47.2 30 46.4 33.5 44.8 36.4C41 39.4 35 40.2 30 38.4C23 35.8 18.6 30 18.8 25.6C18.9 23.4 19.6 21.8 21 21z" fill="#22363f"/></svg>
<div class="a" style="left:436px;top:0px;width:48px;height:16px;background:#4e6269;"></div>
<svg style="left:449.20000000000005px;top:10.399999999999977px" width="21.6" height="18.6" viewBox="0 0 21.6 18.6"><path d="M0 1.2Q0 0 1.2 0H7.4L9 1.8H20.4Q21.6 1.8 21.6 3V18.6H0z" fill="#e8a92d"/><path d="M0 4.4H21.6V18.6H0z" fill="#fcd462"/><path d="M3.6 18.6V11.6H18V18.6H14.4V14.6H7.2V18.6z" fill="#3f8fdc"/><path d="M3.6 11.6H18V13.2H3.6z" fill="#62aaee"/></svg>
<svg style="left:497px;top:8px" width="23" height="12" viewBox="0 0 23 12"><path d="M7.4 6V4.8A4.2 4.2 0 0 1 15.8 4.8V6M9.6 6V5A2.2 2.2 0 0 1 14 5V6" fill="none" stroke="#fff" stroke-width="1"/><rect x="0" y="5.7" width="23" height="6" fill="#fff"/></svg>
<svg style="left:546px;top:9.799999999999955px" width="24.2" height="19.4" viewBox="0 0 24.2 19.4"><path d="M0 6.2L12 0L24.2 6.2V19.4H0z" fill="#fff"/><path d="M0.6 6.6H23.2L14 11.7L18.8 16.2z" fill="#22363f"/></svg>
<svg style="left:594.6px;top:8px" width="24.2" height="24.2" viewBox="0 0 24.2 24.2"><rect width="24.2" height="24.2" rx="4.6" fill="#fbfbfd"/><g fill="none" stroke="url(#gLogo)" stroke-width="4.4" transform="translate(12.1 12.1)"><path d="M-6.6 3.8A7.6 7.6 0 0 1 3.2 -6.9"/><path d="M6.6 -3.8A7.6 7.6 0 0 1 -3.2 6.9"/></g></svg>
<svg style="left:1431px;top:12.299999999999955px" width="23" height="12" viewBox="0 0 23 12"><rect x="0.6" y="0.6" width="21.8" height="10" fill="none" stroke="#fff" stroke-width="1.2"/><path d="M3 3.2H20" stroke="#fff" stroke-width="1"/></svg>
<svg style="left:1506px;top:13.5px" width="9" height="6" viewBox="0 0 9 6"><path d="M0.8 4Q4.4 -0.6 8 3" fill="none" stroke="#fff" stroke-width="1.1"/></svg>
<svg style="left:1527px;top:12px" width="17" height="6" viewBox="0 0 17 6"><path d="M0.6 6V2.4L15.8 0.6V6" fill="none" stroke="#fff" stroke-width="1.1"/></svg>
<svg style="left:1551.5px;top:14px" width="15" height="4" viewBox="0 0 15 4"><path d="M0.6 4V0.6H14.4V4M3 2.4H12" fill="none" stroke="#fff" stroke-width="1.1"/></svg>
<svg style="left:1578px;top:13.600000000000023px" width="14" height="4" viewBox="0 0 14 4"><path d="M1 3.6L4.6 0.8V3.6M8.4 3.6Q9.6 2 8.4 0.6" fill="none" stroke="#fff" stroke-width="1"/></svg>
<div class="t" style="left:1617.0px;top:4.8px;font-size:12px;color:#fff;transform:scaleX(0.866);transform-origin:0 0;">17:17</div>
<div class="a" style="left:1677px;top:11.700000000000045px;width:15.5px;height:6px;background:#fff;"></div>
<div class="a" style="left:1713px;top:0px;width:1px;height:16px;background:#7f8c92;"></div>
</div>
<div class="a" style="left:0px;top:836px;width:1915px;height:37px;background:linear-gradient(90deg,#1b2640 0%,#1b2541 35%,#1a234a 65%,#1a2150 82%,#1a214a 100%);"></div>
<svg style="left:12.5px;top:847.5px" width="17" height="17" viewBox="0 0 17 17"><path d="M0 2.3L7.2 1.3V8H0zM8.1 1.15L17 0V8H8.1zM0 8.9H7.2V15.6L0 14.6zM8.1 8.9H17V17L8.1 15.8z" fill="#fff"/></svg>
<div class="a" style="left:45px;top:836px;width:287.4px;height:37px;background:#f2f2f2;border-top:1px solid #c8c8c8;box-sizing:border-box"></div>
<svg style="left:56px;top:848px" width="18" height="17" viewBox="0 0 18 17"><circle cx="11" cy="5.9" r="4.9" fill="none" stroke="#1a1a1a" stroke-width="1.2"/><path d="M7.6 9.4L1.2 15.6" stroke="#1a1a1a" stroke-width="1.3"/></svg>
<div class="t" style="left:85.2px;top:849.3px;font-size:15px;color:#3b3b3b;transform:scaleX(0.983);transform-origin:0 0;">Taper ici pour rechercher</div>
<svg style="left:348.6px;top:847.5px" width="17" height="16" viewBox="0 0 17 16"><g fill="none" stroke="#fff" stroke-width="1.2"><path d="M0.9 0.3V2.9H10.9V0.3M0.9 15.7V13.1H10.9V15.7"/><rect x="0.9" y="5.1" width="10" height="6"/><path d="M14.9 0.3V3.6M14.9 8.7V15.7"/></g><rect x="13.4" y="4.5" width="3" height="3.1" fill="#fff"/></svg>
<svg style="left:395.9px;top:843.6px" width="24.2" height="24.2" viewBox="0 0 24 24"><use href="#edge"/><path transform="scale(0.5)" d="M21 21C23 19.6 27 20 29 22.4C29.6 27.5 26.5 29 27.6 30.2C29 31.4 34 31.8 39 31.8C43 31.8 46 29.5 47.4 26C47.2 30 46.4 33.5 44.8 36.4C41 39.4 35 40.2 30 38.4C23 35.8 18.6 30 18.8 25.6C18.9 23.4 19.6 21.8 21 21z" fill="#1b2540"/></svg>
<svg style="left:446.2px;top:846.5px" width="21.6" height="18.6" viewBox="0 0 21.6 18.6"><path d="M0 1.2Q0 0 1.2 0H7.4L9 1.8H20.4Q21.6 1.8 21.6 3V18.6H0z" fill="#e8a92d"/><path d="M0 4.4H21.6V18.6H0z" fill="#fcd462"/><path d="M3.6 18.6V11.6H18V18.6H14.4V14.6H7.2V18.6z" fill="#3f8fdc"/><path d="M3.6 11.6H18V13.2H3.6z" fill="#62aaee"/></svg>
<svg style="left:493.8px;top:844.9px" width="23.2" height="23" viewBox="0 0 23.2 23"><path d="M6.4 7V2.6Q6.4 0.9 8.1 0.9H15.1Q16.8 0.9 16.8 2.6V7" fill="none" stroke="#35b6f0" stroke-width="1.8"/><path d="M0 5.6Q0 4.2 1.4 4.2H21.8Q23.2 4.2 23.2 5.6V19.4Q23.2 23 19.6 23H3.6Q0 23 0 19.4z" fill="#f6f6f6"/><path d="M5.5 4.2H7.3V6H5.5zM15.9 4.2H17.7V6H15.9z" fill="#35b6f0"/><rect x="7.3" y="9.3" width="4" height="4" fill="#f25022"/><rect x="12.1" y="9.3" width="4" height="4" fill="#7fba00"/><rect x="7.3" y="14.1" width="4" height="4" fill="#00a4ef"/><rect x="12.1" y="14.1" width="4" height="4" fill="#ffb900"/></svg>
<svg style="left:543px;top:845.7px" width="24.2" height="19.4" viewBox="0 0 24.2 19.4"><path d="M0 6.2L12 0L24.2 6.2V19.4H0z" fill="#fff"/><path d="M0.6 6.6H23.2L14 11.7L18.8 16.2z" fill="#1b2540"/></svg>
<svg style="left:592px;top:843.8px" width="24.2" height="24.2" viewBox="0 0 24.2 24.2"><rect width="24.2" height="24.2" rx="4.6" fill="#fbfbfd"/><g fill="none" stroke="url(#gLogo)" stroke-width="4.4" transform="translate(12.1 12.1)"><path d="M-6.6 3.8A7.6 7.6 0 0 1 3.2 -6.9"/><path d="M6.6 -3.8A7.6 7.6 0 0 1 -3.2 6.9"/></g></svg>
<svg style="left:1560px;top:843px" width="25" height="24" viewBox="0 0 25 24"><circle cx="11.4" cy="13.6" r="9.4" fill="#f7981a"/><circle cx="9.6" cy="11.6" r="5.6" fill="#fbb62e" opacity="0.75"/><path d="M1.6 9.6Q-0.2 9.6 -0.2 7.6Q-0.2 5.4 2.4 5.2Q3 1 6.6 1Q9.6 1 10.6 4Q12.6 4.4 12.6 7Q12.6 9.6 10.4 9.6z" fill="#d4def6"/><path d="M1.6 9.6Q-0.2 9.6 -0.2 7.6Q1.5 8.6 4 8.4H12.2Q11.8 9.6 10.4 9.6z" fill="#9db4ea"/><path d="M11.8 21.7Q10 21.7 10 19.8Q10 17.8 12.4 17.6Q13.2 13.4 17 13.4Q20 13.4 21.2 16.2Q23.9 16.6 23.9 19.2Q23.9 21.7 21.6 21.7z" fill="#d4def6"/><path d="M11.8 21.7Q10 21.7 10 19.8Q11.6 20.8 14 20.6H23.6Q23.2 21.7 21.6 21.7z" fill="#9db4ea"/><circle cx="18" cy="6.7" r="5.8" fill="#d5342a"/></svg>
<div class="t" style="left:1575.6px;top:845.7px;font-size:9px;color:#fff;">1</div>
<div class="t" style="left:1592.3px;top:850.0px;font-size:13px;color:#fff;transform:scaleX(0.949);transform-origin:0 0;">3°C</div>
<div class="t" style="left:1622.4px;top:850.0px;font-size:13px;color:#fff;transform:scaleX(0.983);transform-origin:0 0;">Eclaircies</div>
<svg style="left:1701.5px;top:851.5px" width="13" height="8" viewBox="0 0 13 8"><path d="M0.8 7.2L6.5 1.2L12.2 7.2" fill="none" stroke="#fff" stroke-width="1.3"/></svg>
<svg style="left:1726px;top:847.6px" width="13" height="17" viewBox="0 0 13 17"><rect x="0.8" y="4.6" width="7.6" height="7.8" rx="1.6" fill="none" stroke="#fff" stroke-width="1.1"/><path d="M8.4 7.4L11.6 5.8V11.2L8.4 9.6" fill="none" stroke="#fff" stroke-width="1.1"/><path d="M2.4 1.4Q5.4 0 8.4 1.4M2.4 15.6Q5.4 17 8.4 15.6" fill="none" stroke="#fff" stroke-width="1"/></svg>
<svg style="left:1747.5px;top:849.6px" width="17" height="14" viewBox="0 0 17 14"><rect x="4.2" y="0.6" width="11.6" height="8.6" fill="none" stroke="#fff" stroke-width="1.1"/><path d="M10 9.2V12.4M6.4 12.6H13.6" stroke="#fff" stroke-width="1.1"/><rect x="0.6" y="0.6" width="4.6" height="3.6" fill="#1b2540" stroke="#fff" stroke-width="1"/><path d="M2.9 4.2V12.6H6" fill="none" stroke="#fff" stroke-width="1"/></svg>
<svg style="left:1771.5px;top:849px" width="17" height="14" viewBox="0 0 17 14"><path d="M0.6 4.6H3.2L6.6 1.2V12.8L3.2 9.4H0.6z" fill="none" stroke="#fff" stroke-width="1.1"/><path d="M9 4.8Q10.6 7 9 9.2M11.4 3Q14 7 11.4 11M13.8 1.2Q17.2 7 13.8 12.8" fill="none" stroke="#fff" stroke-width="1.1"/></svg>
<div class="t" style="left:1814.2px;top:841.1px;font-size:11.6px;color:#fff;transform:scaleX(0.885);transform-origin:0 0;">17:17</div>
<div class="t" style="left:1798.8px;top:858.6px;font-size:11.6px;color:#fff;transform:scaleX(0.978);transform-origin:0 0;">13/01/2025</div>
<svg style="left:1874px;top:848.4px" width="16" height="16" viewBox="0 0 16 16"><path d="M0.7 0.7H15.3V11.6H11L8 14.8L5 11.6H0.7z" fill="none" stroke="#fff" stroke-width="1.3"/></svg>
<div class="a" style="left:1910px;top:836px;width:1px;height:37px;background:#6a7080;"></div>
</body></html>
